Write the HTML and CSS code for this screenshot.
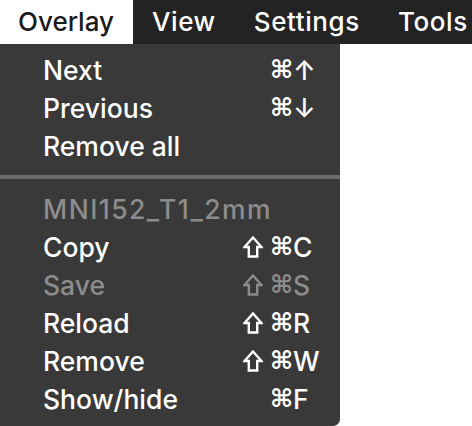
FILE: index.html
```html
<!DOCTYPE html>
<html>
<head>
<meta charset="utf-8">
<link rel="stylesheet" href="styles.css">
</head>
<body>
<div class="menubar">
  <span class="mb-item active">Overlay</span>
  <span class="mb-item">View</span>
  <span class="mb-item">Settings</span>
  <span class="mb-item">Tools</span>
</div>
<div class="menu">
  <div class="row"><span class="label">Next</span><span class="keys"><span class="mod"></span><span class="mod cmd">⌘</span><span class="key">↑</span></span></div>
  <div class="row"><span class="label">Previous</span><span class="keys"><span class="mod"></span><span class="mod cmd">⌘</span><span class="key">↓</span></span></div>
  <div class="row"><span class="label">Remove all</span></div>
  <div class="sep"></div>
  <div class="row disabled"><span class="label wide">MNI152_T1_2mm</span></div>
  <div class="row"><span class="label">Copy</span><span class="keys"><span class="mod"><svg class="shift" viewBox="0 0 20 22"><path d="M10 1.5 L18.5 11 H14.2 V20.5 H5.8 V11 H1.5 Z"/></svg></span><span class="mod cmd">⌘</span><span class="key">C</span></span></div>
  <div class="row disabled"><span class="label">Save</span><span class="keys"><span class="mod"><svg class="shift" viewBox="0 0 20 22"><path d="M10 1.5 L18.5 11 H14.2 V20.5 H5.8 V11 H1.5 Z"/></svg></span><span class="mod cmd">⌘</span><span class="key">S</span></span></div>
  <div class="row"><span class="label">Reload</span><span class="keys"><span class="mod"><svg class="shift" viewBox="0 0 20 22"><path d="M10 1.5 L18.5 11 H14.2 V20.5 H5.8 V11 H1.5 Z"/></svg></span><span class="mod cmd">⌘</span><span class="key">R</span></span></div>
  <div class="row"><span class="label">Remove</span><span class="keys"><span class="mod"><svg class="shift" viewBox="0 0 20 22"><path d="M10 1.5 L18.5 11 H14.2 V20.5 H5.8 V11 H1.5 Z"/></svg></span><span class="mod cmd">⌘</span><span class="key">W</span></span></div>
  <div class="row"><span class="label">Show/hide</span><span class="keys"><span class="mod"></span><span class="mod cmd">⌘</span><span class="key">F</span></span></div>
</div>
</body>
</html>
```

FILE: styles.css
```css
html, body {
  margin: 0;
  padding: 0;
  background: #ffffff;
}
body {
  width: 472px;
  height: 426px;
  overflow: hidden;
  font-family: "Inter", "DejaVu Sans", sans-serif;
  font-size: 26.5px;
  font-weight: 500;
  color: #ffffff;
}
.menubar {
  display: flex;
  height: 44px;
  background: #232323;
  align-items: stretch;
  font-size: 26px;
}
.mb-item {
  display: flex;
  align-items: center;
  padding: 0 19px;
  line-height: 44px;
  white-space: nowrap;
  letter-spacing: 0.6px;
}
.mb-item.active {
  padding-left: 18px;
  letter-spacing: 0;
  background: #ffffff;
  color: #1a1a1a;
}
.menu {
  width: 340px;
  height: 382px;
  box-sizing: border-box;
  background: #393939;
  border-bottom-right-radius: 7px;
  padding-top: 7px;
}
.row {
  display: flex;
  height: 38px;
  line-height: 38px;
  padding-left: 43px;
  white-space: nowrap;
}
.row .label {
  width: 200px;
}
.row .label.wide {
  letter-spacing: 1.45px;
}
.row.disabled {
  color: #8c8c8c;
}
.keys {
  display: grid;
  grid-template-columns: 27px 21px auto;
  align-items: center;
}
.mod {
  display: flex;
  align-items: center;
  height: 38px;
}
.cmd {
  font-family: "DejaVu Sans", sans-serif;
  font-size: 25px;
  font-weight: 700;
}
.shift {
  width: 20px;
  height: 22px;
  margin-top: -1px;
  fill: none;
  stroke: currentColor;
  stroke-width: 2.4;
  stroke-linejoin: miter;
}
.key {
  padding-left: 2px;
}
.sep {
  height: 4px;
  background: #6b6b6b;
  margin: 10px 0 11px;
}
```
